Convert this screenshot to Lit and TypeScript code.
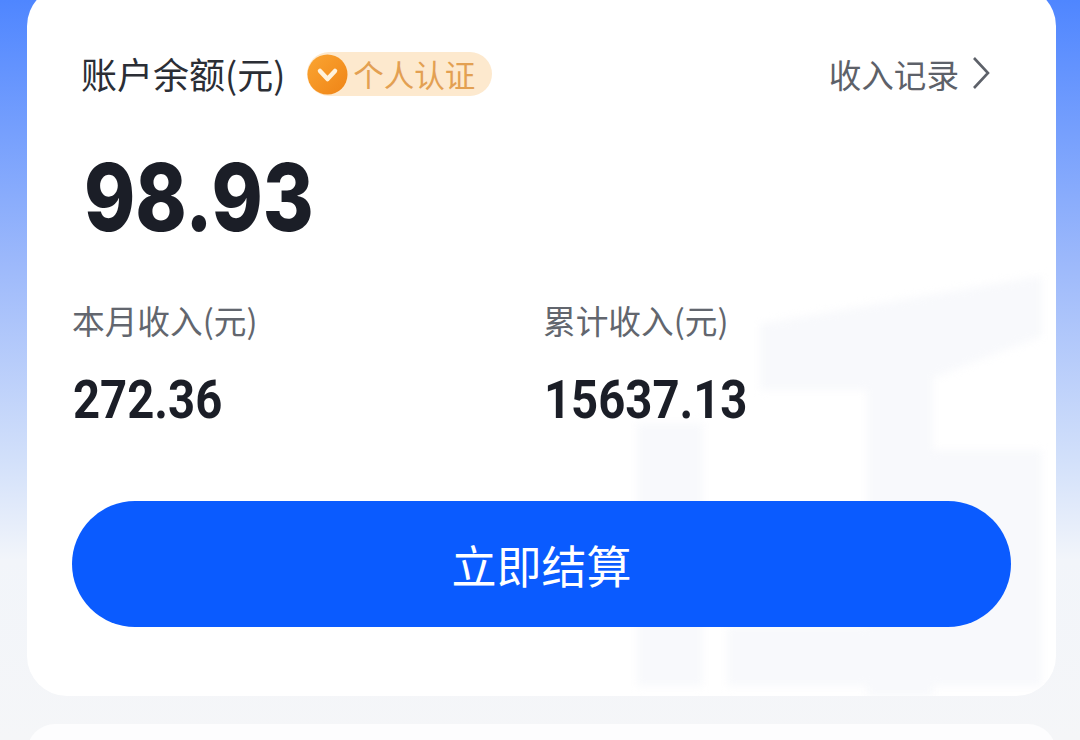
import { LitElement, html, css } from "lit";
import { customElement } from "lit/decorators.js";

@customElement("app-root")
export class AppRoot extends LitElement {
  static styles = css`
    :host {
      display: block;
      width: 1080px;
      height: 740px;
      overflow: hidden;
      position: relative;
      font-family: "Noto Sans CJK SC", "Noto Sans", sans-serif;
      background: linear-gradient(180deg, #4f86ff 0px, #9db9fb 265px, #d2e0fa 460px, #f2f5fa 560px, #f5f6f8 740px);
    }
    .card {
      position: relative;
      box-sizing: border-box;
      margin: -14px 24px 0 27px;
      height: 710px;
      padding: 57px 45px 0 45px;
      background: #fff;
      border-radius: 40px;
      overflow: hidden;
    }
    .next {
      margin: 28px 24px 0 27px;
      height: 60px;
      background: #fdfdfe;
      border-radius: 28px;
    }
    .mark {
      position: absolute;
      left: 0;
      top: 0;
      width: 1029px;
      height: 710px;
      filter: blur(4px);
    }
    .content { position: relative; display: flex; flex-direction: column; }
    .head { display: flex; align-items: center; height: 60px; }
    .title {
      font-size: 36px;
      font-weight: 400;
      color: #2b2e35;
      margin-left: 9px;
      line-height: 60px;
      white-space: nowrap;
    }
    .badge {
      display: flex;
      align-items: center;
      margin-left: 22px;
      margin-top: 2px;
      height: 44px;
      width: 185px;
      border-radius: 22px;
      background: #fde9ce;
      color: #e3a052;
      font-size: 30.5px;
      white-space: nowrap;
      gap: 5px;
    }
    .badge svg { width: 41px; height: 41px; flex: none; }
    .link {
      margin-left: auto;
      margin-right: 21px;
      display: flex;
      align-items: center;
      gap: 13px;
      color: #5d6169;
      font-size: 32.6px;
      white-space: nowrap;
    }
    .link svg { width: 18px; height: 34px; }
    .balance {
      font-family: Inter, Roboto, sans-serif;
      font-weight: 800;
      font-size: 94px;
      line-height: 100px;
      color: #1b1e27;
      margin: 44px 0 0 12px;
      transform: scaleX(0.825);
      transform-origin: left center;
      white-space: nowrap;
    }
    .stats { display: grid; grid-template-columns: 471px 1fr; margin-top: 51px; }
    .stat { display: flex; flex-direction: column; }
    .label { font-size: 32.7px; line-height: 44px; color: #62666e; white-space: nowrap; }
    .value {
      font-family: Roboto, "Noto Sans", sans-serif;
      font-weight: 700;
      font-size: 54px;
      line-height: 60px;
      color: #1b1e27;
      margin: 28px 0 0 1px;
      transform: scaleX(0.875);
      transform-origin: left center;
      white-space: nowrap;
    }
    .btn {
      display: flex;
      align-items: center;
      justify-content: center;
      height: 126px;
      width: 939px;
      border-radius: 63px;
      background: #0a5bff;
      color: #fff;
      font-size: 45px;
      margin-top: 71px;
    }
  `;

  render() {
    return html`
      <div class="card">
        <svg class="mark" viewBox="0 0 1029 710" aria-hidden="true">
          <g fill="#f8f9fc">
            <path d="M733 338 L1015 290 V350 L906 392 V720 H840 V404 H733 Z"/>
            <path d="M610 437 H676 V700 H610 Z"/>
            <path d="M906 464 H1015 V700 H700 V640 H906 Z"/>
          </g>
        </svg>
        <div class="content">
          <div class="head">
            <span class="title">账户余额(元)</span>
            <span class="badge">
              <svg viewBox="0 0 41 41" aria-hidden="true">
                <defs>
                  <linearGradient id="o" x1="0" y1="0" x2="1" y2="1">
                    <stop offset="0" stop-color="#fba532"/>
                    <stop offset="1" stop-color="#ef8416"/>
                  </linearGradient>
                </defs>
                <circle cx="20.5" cy="20.5" r="20" fill="url(#o)"/>
                <path d="M13 17 L20.5 25 L28 17" fill="none" stroke="#fff2dc" stroke-width="4.5" stroke-linecap="round" stroke-linejoin="round"/>
              </svg>
              个人认证
            </span>
            <span class="link">收入记录
              <svg viewBox="0 0 18 34" aria-hidden="true">
                <path d="M2 2 L16 17 L2 32" fill="none" stroke="#5d6169" stroke-width="2.6"/>
              </svg>
            </span>
          </div>
          <div class="balance">98.93</div>
          <div class="stats">
            <div class="stat"><span class="label">本月收入(元)</span><span class="value">272.36</span></div>
            <div class="stat"><span class="label">累计收入(元)</span><span class="value">15637.13</span></div>
          </div>
          <div class="btn">立即结算</div>
        </div>
      </div>
      <div class="next"></div>
    `;
  }
}
